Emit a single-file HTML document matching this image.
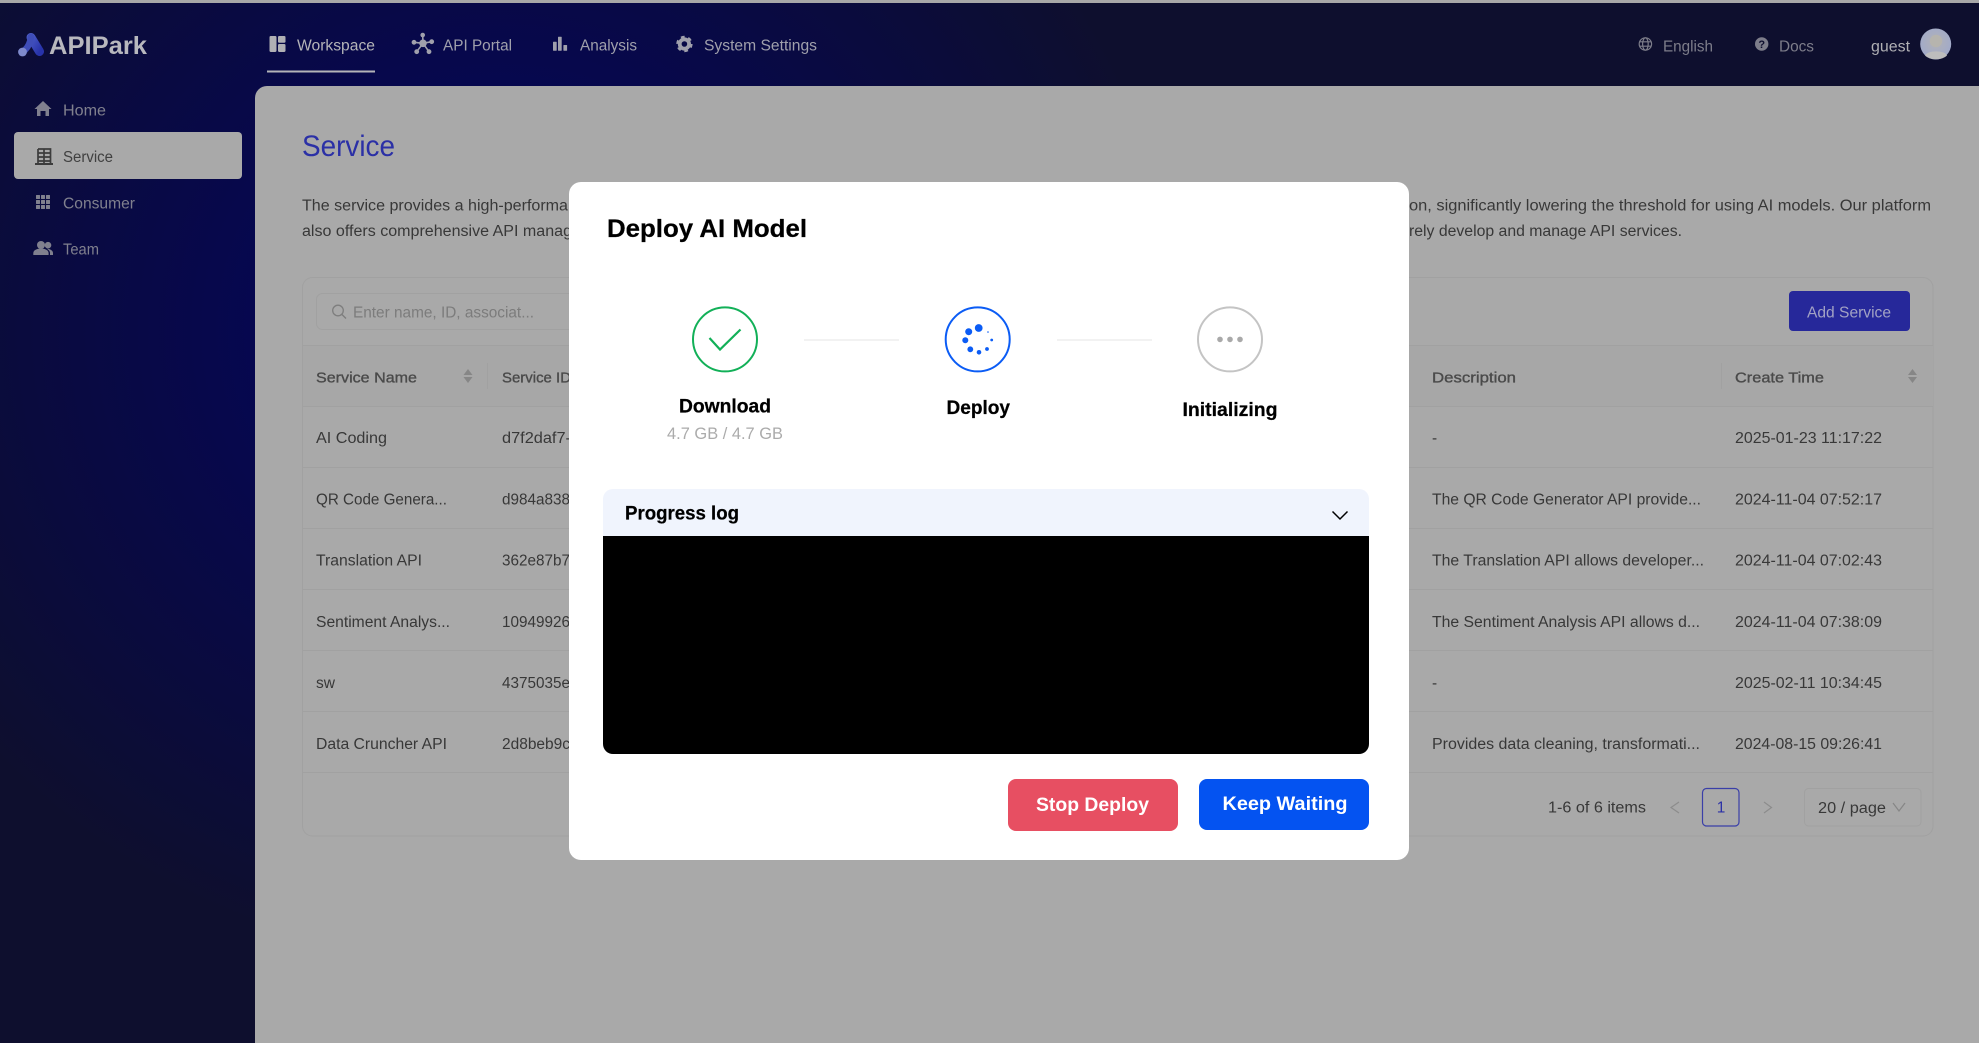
<!DOCTYPE html>
<html lang="en"><head><meta charset="utf-8"><title>APIPark - Deploy AI Model</title>
<style>
html,body{margin:0;padding:0;width:1979px;height:1043px;overflow:hidden;background:#0e0e30}
.bg{position:absolute;left:0;top:0;width:1979px;height:1043px;background:radial-gradient(ellipse 680px 640px at 500px 330px,#05064e 0%,#060750 35%,#0a0b3e 70%,#0e0f2e 100%)}
svg{position:absolute;left:0;top:0;display:block}
text{font-family:"Liberation Sans",sans-serif;font-size:15.4px;fill:#383838}
.nav{font-size:15.5px;fill:#a0a0ac}
.dim{font-size:15.5px;fill:#7d7d8a}
.th{fill:#4a4a4a;font-size:15px;stroke:#4a4a4a;stroke-width:.35px}
.b{font-weight:bold;fill:#000;stroke:#000;stroke-width:.25px}
</style></head><body>
<div class="bg"></div>
<svg width="1979" height="1043" viewBox="0 0 1979 1043" xmlns="http://www.w3.org/2000/svg">
<defs>
<linearGradient id="lg" x1="0" y1="0" x2="1" y2="1"><stop offset="0" stop-color="#4a5ac4"/><stop offset="1" stop-color="#2833aa"/></linearGradient>
<radialGradient id="av" cx=".5" cy=".45" r=".6"><stop offset="0" stop-color="#b2b2b6"/><stop offset="1" stop-color="#9fa9cc"/></radialGradient>
</defs>
<rect x="0" y="0" width="1979" height="3" fill="#a8a8a8"/>

<!-- logo -->
<path d="M31 37.5 L39.5 51.5" stroke="url(#lg)" stroke-width="9" stroke-linecap="round" fill="none"/>
<path d="M31 37 Q30 45 25 50" stroke="#3f4db8" stroke-width="6.5" stroke-linecap="round" fill="none"/>
<circle cx="22.5" cy="52" r="4.4" fill="#7f8acc"/>
<text x="49" y="54" textLength="98" lengthAdjust="spacingAndGlyphs" style="font-size:25px;font-weight:bold;fill:#b8b8be">APIPark</text>

<!-- top nav -->
<g fill="#b0b0b4">
<rect x="269.5" y="36" width="7" height="16" rx="1.2"/><rect x="278" y="36" width="7.5" height="6.8" rx="1.2"/><rect x="278" y="44" width="7.5" height="8" rx="1.2"/>
</g>
<text class="nav" x="297" y="50.5" textLength="78" lengthAdjust="spacingAndGlyphs" style="fill:#b4b4b8">Workspace</text>
<rect x="267" y="70.5" width="108" height="2" fill="#b4b4b8"/>
<g fill="#a0a0ac" stroke="#a0a0ac">
<path d="M423 43.3 L422.7 35 M423 43.3 L414 42.3 M423 43.3 L431.7 41.7 M423 43.3 L416.7 51.7 M423 43.3 L429 51.7" stroke-width="1.6" fill="none"/>
<g stroke="none"><circle cx="423" cy="43.3" r="3.8"/><circle cx="422.7" cy="35" r="2.3"/><circle cx="414" cy="42.3" r="2.4"/><circle cx="431.7" cy="41.7" r="2.4"/><circle cx="416.7" cy="51.7" r="2.4"/><circle cx="429" cy="51.7" r="2.4"/></g>
</g>
<text class="nav" x="443" y="50.5" textLength="69" lengthAdjust="spacingAndGlyphs">API Portal</text>
<g fill="#a0a0ac"><rect x="553" y="41.7" width="3.7" height="9" rx=".6"/><rect x="558" y="36.7" width="3.7" height="14" rx=".6"/><rect x="563.4" y="45" width="3.7" height="5.7" rx=".6"/></g>
<text class="nav" x="580" y="50.5" textLength="57" lengthAdjust="spacingAndGlyphs">Analysis</text>
<circle cx="684.4" cy="44" r="4.7" fill="none" stroke="#a0a0ac" stroke-width="3.8"/>
<circle cx="684.4" cy="44" r="7.2" fill="none" stroke="#a0a0ac" stroke-width="2" stroke-dasharray="3.77 3.77"/>
<text class="nav" x="704" y="50.5" textLength="113" lengthAdjust="spacingAndGlyphs">System Settings</text>

<g fill="none" stroke="#7d7d8a" stroke-width="1.2"><circle cx="1645.4" cy="44" r="6.2"/><ellipse cx="1645.4" cy="44" rx="2.8" ry="6.2"/><path d="M1639.6 41.8h11.6M1639.6 46.2h11.6"/></g>
<text class="dim" x="1663" y="51.5" textLength="50" lengthAdjust="spacingAndGlyphs">English</text>
<circle cx="1761.7" cy="44" r="6.7" fill="#7d7d8a"/>
<text x="1761.7" y="48" text-anchor="middle" style="font-size:11px;font-weight:bold;fill:#0e0f2e">?</text>
<text class="dim" x="1779" y="51.5" textLength="35" lengthAdjust="spacingAndGlyphs">Docs</text>
<text class="nav" x="1871" y="51.5" textLength="39" lengthAdjust="spacingAndGlyphs" style="fill:#b0b0b4">guest</text>
<circle cx="1935.7" cy="44" r="15.5" fill="url(#av)"/>
<circle cx="1936" cy="41" r="6.2" fill="#b6b4ae"/>
<path d="M1925 55.5 C1927 50 1945 50 1947 55.5 C1942 60.5 1930 60.5 1925 55.5Z" fill="#bdbdbd"/>

<!-- sidebar -->
<path d="M43 101 L51.5 109 H49 V116 H45.5 V111 H40.5 V116 H37 V109 H34.5Z" fill="#80808e"/>
<text class="dim" x="63" y="115.5" textLength="43" lengthAdjust="spacingAndGlyphs" style="fill:#80808e">Home</text>
<rect x="14" y="132" width="228" height="47" rx="4" fill="#a9a9a9"/>
<g fill="none" stroke="#3c3c3c" stroke-width="1.7"><path d="M38 149 H50.5 V163 M38 149 V163 M38 153 H50.5 M38 157 H50.5 M38 161 H50.5 M44 149 V163"/><path d="M35 164 H53" stroke-width="2"/></g>
<text x="63" y="162" textLength="50" lengthAdjust="spacingAndGlyphs" style="fill:#404040">Service</text>
<g fill="#80808e">
<rect x="36" y="195" width="4" height="4" rx=".5"/><rect x="41" y="195" width="4" height="4" rx=".5"/><rect x="46" y="195" width="4" height="4" rx=".5"/>
<rect x="36" y="200" width="4" height="4" rx=".5"/><rect x="41" y="200" width="4" height="4" rx=".5"/><rect x="46" y="200" width="4" height="4" rx=".5"/>
<rect x="36" y="205" width="4" height="4" rx=".5"/><rect x="41" y="205" width="4" height="4" rx=".5"/><rect x="46" y="205" width="4" height="4" rx=".5"/>
</g>
<text class="dim" x="63" y="208.3" textLength="72" lengthAdjust="spacingAndGlyphs" style="fill:#80808e">Consumer</text>
<g fill="#80808e"><circle cx="41" cy="245" r="4"/><circle cx="48" cy="245.2" r="3.3"/>
<path d="M33.3 255 V253 C33.3 250 37.5 248.5 41 248.5 S48.6 250 48.6 253 V255Z"/><path d="M50 255 H53 V253 C53 250.5 50 249 47 248.8 C49 250 50 251.5 50 253Z"/></g>
<text class="dim" x="63" y="254.5" textLength="36" lengthAdjust="spacingAndGlyphs" style="fill:#80808e">Team</text>

<!-- main panel -->
<path d="M255 98 a12 12 0 0 1 12 -12 H1979 V1043 H255Z" fill="#a9a9a9"/>
<text x="302" y="156" textLength="93" lengthAdjust="spacingAndGlyphs" style="font-size:30px;fill:#2b30a6">Service</text>
<text x="302" y="210.5" textLength="266" lengthAdjust="spacingAndGlyphs">The service provides a high-performa</text>
<text x="302" y="236" textLength="270" lengthAdjust="spacingAndGlyphs">also offers comprehensive API manag</text>
<text x="1409" y="210.5" textLength="522" lengthAdjust="spacingAndGlyphs">on, significantly lowering the threshold for using AI models. Our platform</text>
<text x="1409" y="236" textLength="273" lengthAdjust="spacingAndGlyphs">rely develop and manage API services.</text>

<!-- table card -->
<rect x="302.5" y="277.5" width="1630.5" height="558.5" rx="10" fill="#a9a9a9" stroke="#a1a1a1"/>
<rect x="316.5" y="293.5" width="300" height="36" rx="6" fill="none" stroke="#a1a1a1"/>
<circle cx="338" cy="310.5" r="5.3" fill="none" stroke="#7e7e7e" stroke-width="1.3"/><path d="M342 314.5 L346 318.5" stroke="#7e7e7e" stroke-width="1.4"/>
<text x="353" y="317.5" textLength="181" lengthAdjust="spacingAndGlyphs" style="fill:#7c7c7c">Enter name, ID, associat...</text>
<rect x="1789" y="291" width="121" height="40" rx="4" fill="#26289a"/>
<text x="1807" y="317.5" textLength="84" lengthAdjust="spacingAndGlyphs" style="fill:#a2a2c4">Add Service</text>

<rect x="303" y="345" width="1630" height="61" fill="#a7a7a7"/>
<g stroke="#a1a1a1" stroke-width="1"><path d="M303 345.5H1933M303 406.5H1933M303 467.5H1933M303 528.5H1933M303 589.5H1933M303 650.5H1933M303 711.5H1933M303 772.5H1933"/>
<path d="M487.5 363V389M1721.5 363V389"/></g>
<text class="th" x="316" y="382.5" textLength="101" lengthAdjust="spacingAndGlyphs">Service Name</text>
<g fill="#868686"><path d="M468 369 L472.5 375 H463.5Z M463.5 377 H472.5 L468 383Z"/><path d="M1912.5 369 L1917 375 H1908Z M1908 377 H1917 L1912.5 383Z"/></g>
<text class="th" x="502" y="382.5" textLength="69" lengthAdjust="spacingAndGlyphs">Service ID</text>
<text class="th" x="1432" y="382.5" textLength="84" lengthAdjust="spacingAndGlyphs">Description</text>
<text class="th" x="1735" y="382.5" textLength="89" lengthAdjust="spacingAndGlyphs">Create Time</text>

<text x="316" y="443" textLength="71" lengthAdjust="spacingAndGlyphs">AI Coding</text>
<text x="316" y="504.5" textLength="131" lengthAdjust="spacingAndGlyphs">QR Code Genera...</text>
<text x="316" y="565.5" textLength="106" lengthAdjust="spacingAndGlyphs">Translation API</text>
<text x="316" y="627" textLength="134" lengthAdjust="spacingAndGlyphs">Sentiment Analys...</text>
<text x="316" y="688" textLength="19" lengthAdjust="spacingAndGlyphs">sw</text>
<text x="316" y="749" textLength="131" lengthAdjust="spacingAndGlyphs">Data Cruncher API</text>

<text x="502" y="443" textLength="69" lengthAdjust="spacingAndGlyphs">d7f2daf7-</text>
<text x="502" y="504.5" textLength="68" lengthAdjust="spacingAndGlyphs">d984a838</text>
<text x="502" y="565.5" textLength="68" lengthAdjust="spacingAndGlyphs">362e87b7</text>
<text x="502" y="627" textLength="68" lengthAdjust="spacingAndGlyphs">10949926</text>
<text x="502" y="688" textLength="68" lengthAdjust="spacingAndGlyphs">4375035e</text>
<text x="502" y="749" textLength="68" lengthAdjust="spacingAndGlyphs">2d8beb9c</text>

<text x="1432" y="443">-</text>
<text x="1432" y="504.5" textLength="269" lengthAdjust="spacingAndGlyphs">The QR Code Generator API provide...</text>
<text x="1432" y="565.5" textLength="272" lengthAdjust="spacingAndGlyphs">The Translation API allows developer...</text>
<text x="1432" y="627" textLength="268" lengthAdjust="spacingAndGlyphs">The Sentiment Analysis API allows d...</text>
<text x="1432" y="688">-</text>
<text x="1432" y="749" textLength="268" lengthAdjust="spacingAndGlyphs">Provides data cleaning, transformati...</text>

<text x="1735" y="443" textLength="147" lengthAdjust="spacingAndGlyphs">2025-01-23 11:17:22</text>
<text x="1735" y="504.5" textLength="147" lengthAdjust="spacingAndGlyphs">2024-11-04 07:52:17</text>
<text x="1735" y="565.5" textLength="147" lengthAdjust="spacingAndGlyphs">2024-11-04 07:02:43</text>
<text x="1735" y="627" textLength="147" lengthAdjust="spacingAndGlyphs">2024-11-04 07:38:09</text>
<text x="1735" y="688" textLength="147" lengthAdjust="spacingAndGlyphs">2025-02-11 10:34:45</text>
<text x="1735" y="749" textLength="147" lengthAdjust="spacingAndGlyphs">2024-08-15 09:26:41</text>

<!-- pagination -->
<text x="1548" y="812.5" textLength="98" lengthAdjust="spacingAndGlyphs">1-6 of 6 items</text>
<path d="M1679 802 L1671 807.5 L1679 813" fill="none" stroke="#8c8c8c" stroke-width="1.2"/>
<rect x="1702.5" y="788.5" width="36.5" height="37.5" rx="4" fill="none" stroke="#3a3fa8" stroke-width="1.2"/>
<text x="1721" y="812.5" text-anchor="middle" style="fill:#2b30a6">1</text>
<path d="M1764 802 L1771.5 807.5 L1764 813" fill="none" stroke="#8c8c8c" stroke-width="1.2"/>
<rect x="1804.5" y="788.5" width="116.5" height="37.5" rx="4" fill="none" stroke="#a1a1a1"/>
<text x="1818" y="813" textLength="68" lengthAdjust="spacingAndGlyphs">20 / page</text>
<path d="M1893 803 L1899 811 L1905 803" fill="none" stroke="#868686" stroke-width="1.2"/>

<!-- modal -->
<rect x="569" y="182" width="840" height="678" rx="12" fill="#ffffff"/>
<text class="b" x="607" y="237" textLength="200" lengthAdjust="spacingAndGlyphs" style="font-size:25px">Deploy AI Model</text>

<circle cx="725" cy="339.4" r="32" fill="none" stroke="#12b058" stroke-width="2"/>
<path d="M709.5 338 L720 349.5 L740.5 329.5" fill="none" stroke="#12b058" stroke-width="2.2"/>
<rect x="804" y="339" width="95" height="2" fill="#f2f2f2"/>
<circle cx="977.7" cy="339.4" r="32" fill="none" stroke="#0b5cf5" stroke-width="2"/>
<g fill="#0b5cf5"><circle cx="978.7" cy="328" r="3.9"/><circle cx="968.7" cy="331.7" r="3.5"/><circle cx="965.3" cy="340.3" r="3"/><circle cx="970.3" cy="349.3" r="2.9"/><circle cx="979" cy="352.3" r="2.3"/><circle cx="987" cy="349" r="1.9"/><circle cx="991.7" cy="340" r="1.4"/><circle cx="988" cy="332" r=".8"/></g>
<rect x="1057" y="339" width="95" height="2" fill="#f2f2f2"/>
<circle cx="1230" cy="339.4" r="32" fill="none" stroke="#c4c4c4" stroke-width="2"/>
<g fill="#a9a9a9"><circle cx="1220" cy="339.4" r="2.8"/><circle cx="1230" cy="339.4" r="2.8"/><circle cx="1240" cy="339.4" r="2.8"/></g>

<text class="b" x="679" y="412.5" textLength="92" lengthAdjust="spacingAndGlyphs" style="font-size:19px">Download</text>
<text x="667" y="439" textLength="116" lengthAdjust="spacingAndGlyphs" style="font-size:16.5px;fill:#ababab">4.7 GB / 4.7 GB</text>
<text class="b" x="946.5" y="414" textLength="63.5" lengthAdjust="spacingAndGlyphs" style="font-size:19px">Deploy</text>
<text class="b" x="1182.5" y="416" textLength="95" lengthAdjust="spacingAndGlyphs" style="font-size:19px">Initializing</text>

<path d="M603 499 a10 10 0 0 1 10 -10 H1359 a10 10 0 0 1 10 10 V536 H603Z" fill="#f0f4fd"/>
<text class="b" x="625" y="519.5" textLength="114" lengthAdjust="spacingAndGlyphs" style="font-size:19px">Progress log</text>
<path d="M1332.5 511.5 L1340 519 L1347.5 511.5" fill="none" stroke="#000" stroke-width="1.5"/>
<path d="M603 536 H1369 V744 a10 10 0 0 1 -10 10 H613 a10 10 0 0 1 -10 -10Z" fill="#000"/>

<rect x="1008" y="779" width="170" height="52" rx="8" fill="#e74f62"/>
<text x="1036" y="811" textLength="113" lengthAdjust="spacingAndGlyphs" style="font-size:19.5px;font-weight:bold;fill:#fff">Stop Deploy</text>
<rect x="1199" y="779" width="170" height="51" rx="8" fill="#0453f1"/>
<text x="1222.5" y="810" textLength="125" lengthAdjust="spacingAndGlyphs" style="font-size:19.5px;font-weight:bold;fill:#fff">Keep Waiting</text>
</svg>
</body></html>
